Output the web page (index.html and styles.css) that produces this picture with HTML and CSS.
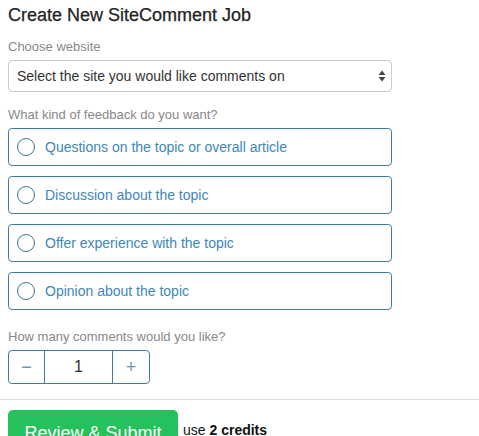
FILE: index.html
```html
<!DOCTYPE html>
<html>
<head>
<meta charset="utf-8">
<link rel="stylesheet" href="styles.css">
</head>
<body>
<div class="page">
  <h1 class="title">Create New SiteComment Job</h1>
  <div class="label">Choose website</div>
  <div class="select">
    <span>Select the site you would like comments on</span>
    <svg class="arrows" width="8" height="12" viewBox="0 0 8 12"><path d="M4 0.5 L7.5 5 L0.5 5 Z M4 11.5 L7.5 7 L0.5 7 Z" fill="#444"/></svg>
  </div>
  <div class="label feedback-label">What kind of feedback do you want?</div>
  <div class="options">
    <div class="option"><span class="radio"></span><span>Questions on the topic or overall article</span></div>
    <div class="option"><span class="radio"></span><span>Discussion about the topic</span></div>
    <div class="option"><span class="radio"></span><span>Offer experience with the topic</span></div>
    <div class="option"><span class="radio"></span><span>Opinion about the topic</span></div>
  </div>
  <div class="label count-label">How many comments would you like?</div>
  <div class="stepper">
    <div class="step-btn minus">&minus;</div>
    <div class="step-val">1</div>
    <div class="step-btn plus">+</div>
  </div>
</div>
<hr class="divider">
<div class="page footer">
  <div class="submit">Review &amp; Submit</div>
  <span class="credits">use <b>2 credits</b></span>
</div>
</body>
</html>
```
FILE: styles.css
```css
html, body {
  margin: 0;
  padding: 0;
  background: #fff;
  font-family: "Liberation Sans", Arial, sans-serif;
}
.page {
  padding: 0 8px;
  width: 384px;
}
.title {
  font-size: 18px;
  font-weight: normal;
  color: #222;
  margin: 3px 0 0 0;
  line-height: 24px;
  -webkit-text-stroke: 0.25px #222;
}
.label {
  font-size: 13px;
  color: #888;
  margin-top: 12px;
  line-height: 16px;
}
.feedback-label { margin-top: 15px; }
.select {
  margin-top: 5px;
  height: 30px;
  border: 1px solid #ccc;
  border-radius: 4px;
  display: flex;
  align-items: center;
  justify-content: space-between;
  padding: 0 5px 0 8px;
  font-size: 14px;
  color: #333;
}
.arrows { display: block; }
.options {
  margin-top: 5px;
  display: flex;
  flex-direction: column;
  gap: 10px;
}
.option {
  height: 36px;
  border: 1px solid #3e7d9c;
  border-radius: 4px;
  display: flex;
  align-items: center;
  padding-left: 8px;
  gap: 10px;
  font-size: 14px;
  color: #3e87b8;
}
.radio {
  width: 16px;
  height: 16px;
  border: 1.5px solid #3e7290;
  border-radius: 50%;
  flex: none;
}
.count-label { margin-top: 19px; }
.stepper {
  margin-top: 5px;
  display: flex;
  width: 140px;
  height: 32px;
  border: 1px solid #3e7d9c;
  border-radius: 4px;
}
.step-btn {
  display: flex;
  align-items: center;
  justify-content: center;
  color: #6a98b4;
  font-size: 18px;
}
.minus { width: 35px; }
.plus { width: 36px; }
.step-val {
  width: 67px;
  border-left: 1px solid #3e7d9c;
  border-right: 1px solid #3e7d9c;
  display: flex;
  align-items: center;
  justify-content: center;
  font-size: 16px;
  color: #333;
}
.divider {
  border: 0;
  border-top: 1px solid #ddd;
  margin: 15px 0 10px 0;
}
.footer {
  display: flex;
  align-items: flex-start;
  gap: 5px;
}
.submit {
  background: #25c15c;
  color: #fff;
  border-radius: 5px;
  width: 170px;
  padding: 13px 0 12px 0;
  text-align: center;
  font-size: 18px;
}
.credits {
  margin-top: 12px;
  font-size: 14px;
  line-height: 16px;
  color: #111;
}
.credits b { font-weight: bold; }
```
